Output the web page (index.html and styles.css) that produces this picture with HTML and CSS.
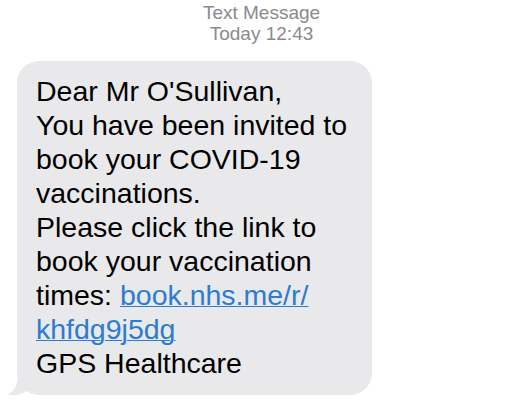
FILE: index.html
```html
<!DOCTYPE html>
<html lang="en">
<head>
    <meta charset="UTF-8">
    <meta name="viewport" content="width=device-width, initial-scale=1.0">
    <title>Text Message</title>
    <link rel="stylesheet" href="styles.css">
</head>
<body>
    <div class="header">
        <div>Text Message</div>
        <div>Today 12:43</div>
    </div>

    <div class="thread">
        <!-- incoming message -->
        <div class="bubble">
            <svg class="tail" width="30" height="22" viewBox="0 0 30 22">
                <path d="M14 0 C14 10 11 16 4 21 C12 22 19 20 24 16 L30 10 L30 0 Z" fill="#e9e9eb"/>
            </svg>
            <p>Dear Mr O'Sullivan,<br>
            You have been invited to<br>
            book your COVID-19<br>
            vaccinations.<br>
            Please click the link to<br>
            book your vaccination<br>
            times: <a href="#">book.nhs.me/r/<br>khfdg9j5dg</a><br>
            GPS Healthcare</p>
        </div>
    </div>
</body>
</html>
```

FILE: styles.css
```css
body {
    margin: 0;
    background-color: #ffffff;
    font-family: "Liberation Sans", Arial, sans-serif;
}

.header {
    padding-top: 2px;
    text-align: center;
    color: #8a8a8e;
    font-size: 19px;
    line-height: 21px;
}

.thread {
    padding-left: 17px;
    padding-top: 17px;
}

.bubble {
    position: relative;
    width: 355px;
    box-sizing: border-box;
    padding: 13px 8px 15px 19px;
    background-color: #e9e9eb;
    border-radius: 22px;
}

.bubble p {
    margin: 0;
    font-size: 28.5px;
    line-height: 34px;
    color: #000000;
}

.bubble a {
    color: #2b7cd3;
    text-decoration: underline;
    text-decoration-thickness: 1px;
}

.tail {
    position: absolute;
    left: -13px;
    bottom: -1px;
}
```
